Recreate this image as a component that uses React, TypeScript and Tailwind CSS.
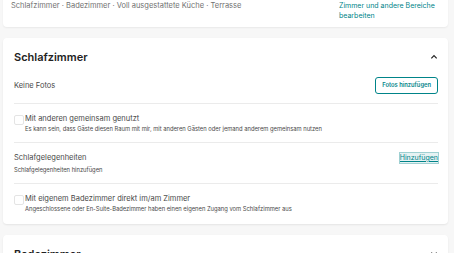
import React from 'react';

const font = { fontFamily: 'Inter, "Noto Sans", sans-serif' };

function Checkbox() {
  return <div className="mt-[1px] h-[10px] w-[10px] shrink-0 rounded-[2px] border border-[#e4e4e4] bg-white" />;
}

function Chevron({ up }: { up: boolean }) {
  return (
    <svg width="8" height="8" viewBox="0 0 12 12" fill="none" stroke="#222222" strokeWidth="1.8">
      {up ? <path d="M2 8 L6 4 L10 8" /> : <path d="M2 4 L6 8 L10 4" />}
    </svg>
  );
}

export default function App() {
  return (
    <div className="min-h-screen bg-[#f7f7f7] pb-4 text-[#222222]" style={font}>
      <div className="-mt-[6px] ml-[3px] mr-[6px] flex justify-between rounded-b-[4px] bg-white pb-[6px] pl-[8px] pr-[9px] pt-[7px] shadow-[0_1px_2px_rgba(0,0,0,0.06)]">
        <p className="text-[7.5px] leading-[10px] text-[#717171]">Schlafzimmer · Badezimmer · Voll ausgestattete Küche · Terrasse</p>
        <a className="w-[100px] shrink-0 text-[7px] leading-[10px] text-[#008489]">Zimmer und andere Bereiche bearbeiten</a>
      </div>

      <section className="ml-[3px] mr-[6px] mt-[11px] rounded-[4px] bg-white pl-[11px] pr-[10px] shadow-[0_1px_2px_rgba(0,0,0,0.08)]">
        <div className="flex items-center justify-between pb-[12px] pt-[11px]">
          <h2 className="text-[11px] font-semibold leading-[16px]">Schlafzimmer</h2>
          <Chevron up />
        </div>
        <div className="flex items-center justify-between border-b border-[#ebebeb] pb-[9px]">
          <span className="text-[7.5px] text-[#484848]">Keine Fotos</span>
          <button className="h-[17px] rounded-[3px] border border-[#008489] px-[6px] text-[5.8px] font-semibold text-[#008489]">Fotos hinzufügen</button>
        </div>
        <div className="flex gap-[1px] border-b border-[#ebebeb] pb-[9px] pt-[10px]">
          <Checkbox />
          <div>
            <p className="text-[7.5px] leading-[10px] text-[#484848]">Mit anderen gemeinsam genutzt</p>
            <p className="mt-[1px] text-[5.8px] leading-[8px] text-[#484848]">Es kann sein, dass Gäste diesen Raum mit mir, mit anderen Gästen oder jemand anderem gemeinsam nutzen</p>
          </div>
        </div>
        <div className="border-b border-[#ebebeb] pb-[9px] pt-[10px]">
          <div className="flex items-center justify-between">
            <p className="text-[7.5px] leading-[10px] text-[#484848]">Schlafgelegenheiten</p>
            <a className="bg-[#e6f2f3] text-[7px] leading-[10px] text-[#008489] underline outline outline-1 outline-[#9fd0d2]">Hinzufügen</a>
          </div>
          <p className="mt-[3px] text-[5.8px] leading-[8px] text-[#484848]">Schlafgelegenheiten hinzufügen</p>
        </div>
        <div className="flex gap-[1px] pb-[11px] pt-[10px]">
          <Checkbox />
          <div>
            <p className="text-[7.5px] leading-[10px] text-[#484848]">Mit eigenem Badezimmer direkt im/am Zimmer</p>
            <p className="mt-[1px] text-[5.8px] leading-[8px] text-[#484848]">Angeschlossene oder En-Suite-Badezimmer haben einen eigenen Zugang vom Schlafzimmer aus</p>
          </div>
        </div>
      </section>

      <section className="ml-[3px] mr-[6px] mt-[11px] rounded-[4px] bg-white pl-[11px] pr-[10px] shadow-[0_1px_2px_rgba(0,0,0,0.08)]">
        <div className="flex items-center justify-between pb-[12px] pt-[11px]">
          <h2 className="text-[11px] font-semibold leading-[16px]">Badezimmer</h2>
          <Chevron up={false} />
        </div>
      </section>
    </div>
  );
}
